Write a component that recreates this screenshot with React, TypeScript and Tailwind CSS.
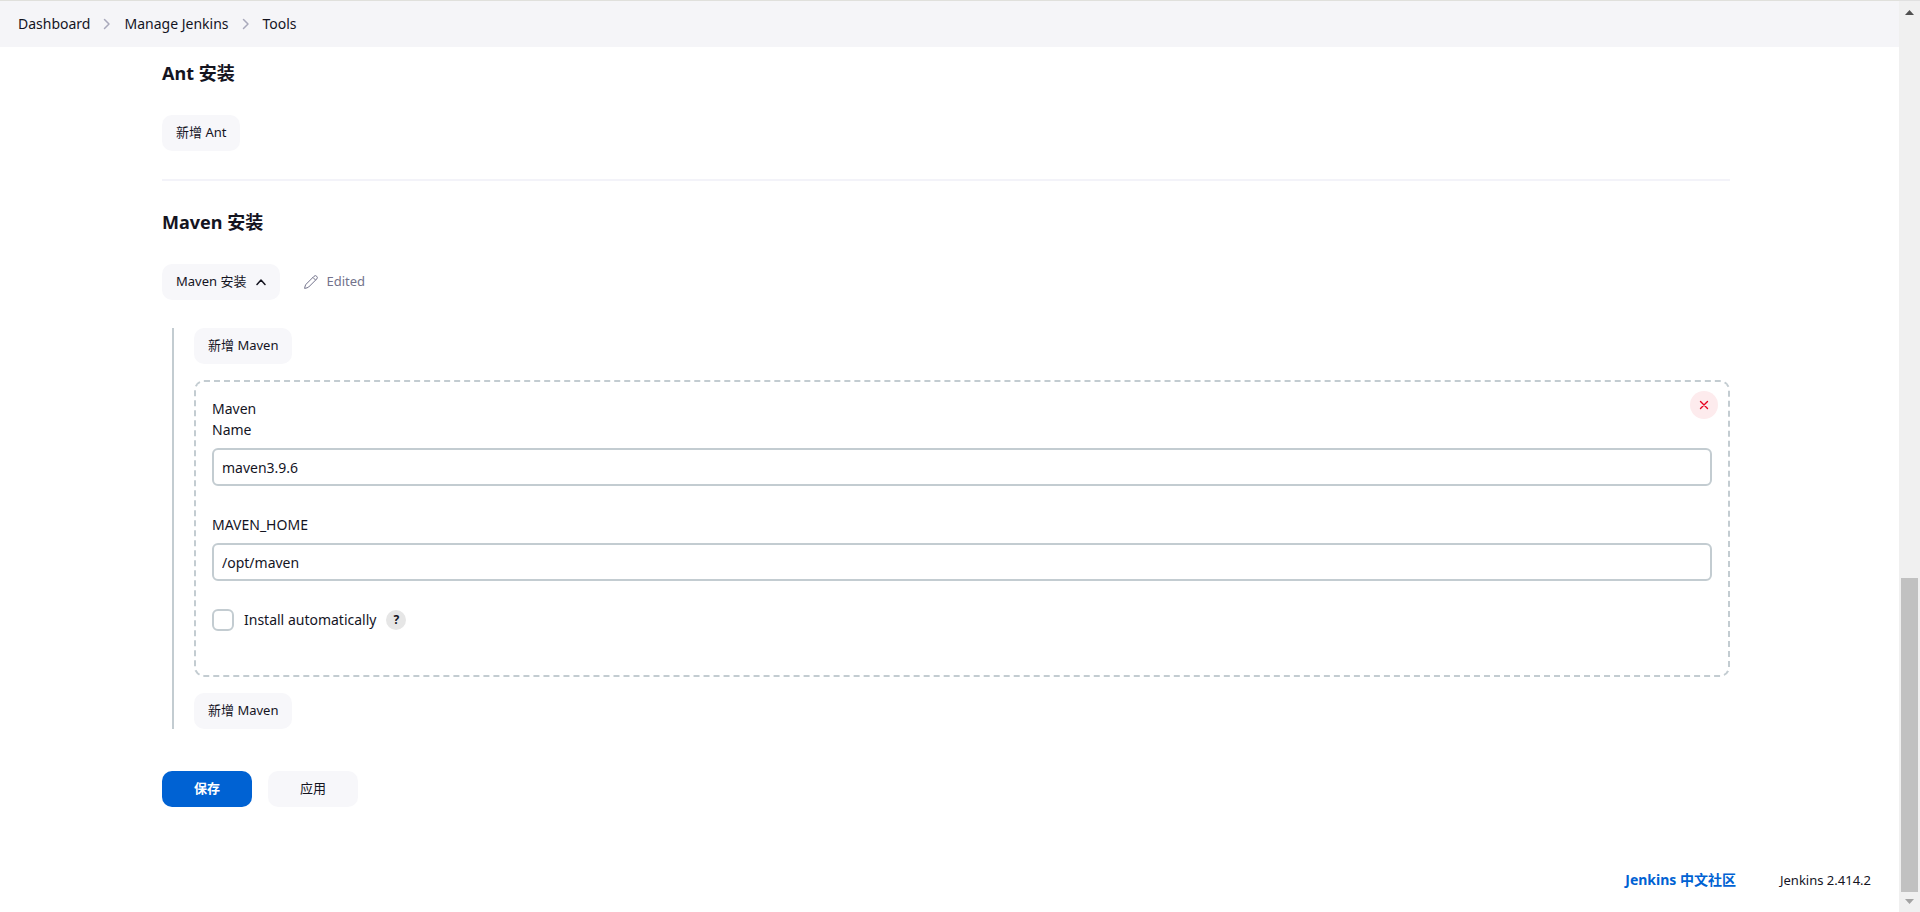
import { useState } from "react";
import type { ReactNode } from "react";

const crumbs = ["Dashboard", "Manage Jenkins", "Tools"];

function Button({ children, onClick }: { children: ReactNode; onClick?: () => void }) {
  return (
    <button
      type="button"
      onClick={onClick}
      className="flex h-9 items-center rounded-[10px] bg-[#f7f7fa] px-[14px] text-[13px] whitespace-nowrap hover:bg-[#eeeef3]"
    >
      {children}
    </button>
  );
}

function Breadcrumbs() {
  return (
    <nav className="h-[47px] border-t border-[#e0e0dc] bg-[#f5f5f8] px-[18px]">
      <ol className="flex h-full items-center text-sm">
        {crumbs.map((crumb, i) => (
          <li key={crumb} className="flex items-center">
            {i > 0 && (
              <svg className="mx-[13px] h-3 w-2" viewBox="0 0 8 12" fill="none">
                <path
                  d="M1.5 1.5 6 6l-4.5 4.5"
                  stroke="#a9a9bb"
                  strokeWidth="1.5"
                  strokeLinecap="round"
                  strokeLinejoin="round"
                />
              </svg>
            )}
            <a href="#" className="hover:underline">
              {crumb}
            </a>
          </li>
        ))}
      </ol>
    </nav>
  );
}

function TextField({ id, label, initial }: { id: string; label: string; initial: string }) {
  const [value, setValue] = useState(initial);

  return (
    <div className="mb-7">
      <label htmlFor={id} className="mb-2 block text-sm leading-[21px]">
        {label}
      </label>
      <input
        id={id}
        type="text"
        value={value}
        onChange={(e) => setValue(e.target.value)}
        className="block h-[38px] w-full rounded-md border-2 border-[#c3ccd1] bg-white px-2 text-sm outline-none focus:border-[#0062d3]"
      />
    </div>
  );
}

function MavenTool() {
  const [auto, setAuto] = useState(false);

  return (
    <div className="relative my-4 rounded-[10px] border-2 border-dashed border-[#c3ccd1] px-4 pt-4 pb-11">
      <button
        type="button"
        aria-label="Delete"
        className="absolute top-[9px] right-[10px] flex h-7 w-7 items-center justify-center rounded-full bg-[#fdebed]"
      >
        <svg className="h-[10px] w-[10px]" viewBox="0 0 10 10">
          <path d="M1.5 1.5l7 7M8.5 1.5l-7 7" stroke="#e6001f" strokeWidth="1.4" strokeLinecap="round" />
        </svg>
      </button>

      <div className="text-sm leading-[21px]">Maven</div>
      <TextField id="maven-name" label="Name" initial="maven3.9.6" />
      <TextField id="maven-home" label="MAVEN_HOME" initial="/opt/maven" />

      <div className="flex items-center">
        <input
          id="auto-install"
          type="checkbox"
          checked={auto}
          onChange={(e) => setAuto(e.target.checked)}
          className="h-[22px] w-[22px] appearance-none rounded-md border-2 border-[#c3ccd1] bg-white checked:border-[#0062d3] checked:bg-[#0062d3]"
        />
        <label htmlFor="auto-install" className="pl-[10px] text-sm">
          Install automatically
        </label>
        <a
          href="#"
          className="ml-[10px] flex h-5 w-5 items-center justify-center rounded-full bg-[#e6e6e6] text-xs font-bold"
        >
          ?
        </a>
      </div>
    </div>
  );
}

// Windows style scrollbar column
function Scrollbar() {
  return (
    <div aria-hidden="true" className="sticky top-0 flex h-screen w-[21px] shrink-0 flex-col items-center border-t border-[#e0e0e0] bg-[#f0f0f0]">
      <svg className="h-5 w-[9px] shrink-0" viewBox="0 0 9 20">
        <path d="M0 14h9L4.500 9z" fill="#505050" />
      </svg>
      <div className="w-full grow-[64]" />
      <div className="w-[17px] grow-[36] bg-[#c1c1c1]" />
      <svg className="h-5 w-[9px] shrink-0" viewBox="0 0 9 20">
        <path d="M0 7h9L4.500 12z" fill="#a3a3a3" />
      </svg>
    </div>
  );
}

export default function App() {
  const [open, setOpen] = useState(true);

  return (
    <div className="flex min-h-screen bg-white font-['Noto_Sans','Noto_Sans_CJK_SC',sans-serif] text-[#14141f]">
      <div className="flex min-w-0 grow flex-col">
        <Breadcrumbs />

        <main className="mr-[169px] ml-[162px]">
          <section className="border-b-2 border-[#f3f3f9] pt-[13px] pb-7">
            <h2 className="mb-7 text-lg leading-[27px] font-bold">Ant 安装</h2>
            <Button>新增 Ant</Button>
          </section>

          <section className="pt-7">
            <h2 className="mb-7 text-lg leading-[27px] font-bold">Maven 安装</h2>
            <div className="flex items-center gap-6">
              <Button onClick={() => setOpen(!open)}>
                Maven 安装
                <svg
                  className={open ? "ml-[10px] h-[10px] w-[10px]" : "ml-[10px] h-[10px] w-[10px] rotate-180"}
                  viewBox="0 0 10 10"
                  fill="none"
                >
                  <path
                    d="M1 7.500 5 3l4 4.500"
                    stroke="currentColor"
                    strokeWidth="1.5"
                    strokeLinecap="round"
                    strokeLinejoin="round"
                  />
                </svg>
              </Button>
              <span className="flex items-center gap-2 text-[13px] text-[#73738c]">
                <svg className="h-[14px] w-[14px]" viewBox="0 0 14 14" fill="none" stroke="currentColor" strokeLinejoin="round">
                  <path d="M12.700 1.300a1.900 1.900 0 0 0-2.700 0L2 9.300Q1 10.600.6 13.400 3.400 13 4.700 12l8-8a1.900 1.900 0 0 0 0-2.700z" />
                  <path d="M8.900 2.400l2.700 2.700" />
                </svg>
                Edited
              </span>
            </div>

            {open && (
              <div className="mt-7 ml-[10px] border-l-2 border-[#c3ccd1] pl-5">
                <Button>新增 Maven</Button>
                <MavenTool />
                <Button>新增 Maven</Button>
              </div>
            )}
          </section>

          <div className="mt-[42px] flex gap-4 text-[13px]">
            <button type="button" className="h-9 w-[90px] rounded-[10px] bg-[#0062d3] font-bold text-white">
              保存
            </button>
            <button type="button" className="h-9 w-[90px] rounded-[10px] bg-[#f7f7fa]">
              应用
            </button>
          </div>
        </main>

        <footer className="mt-auto flex items-center justify-end gap-11 pr-7 pb-5 text-[13px] leading-6">
          <a href="#" className="text-sm font-bold text-[#0062d3]">
            Jenkins 中文社区
          </a>
          <span>Jenkins 2.414.2</span>
        </footer>
      </div>
      <Scrollbar />
    </div>
  );
}
